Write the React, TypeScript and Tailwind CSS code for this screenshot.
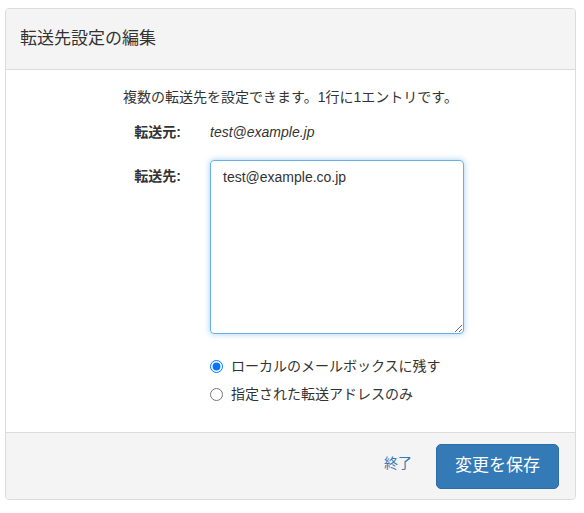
export default function App() {
  return (
    <div className="w-[584px] h-[513px] bg-white pt-[8px] px-[5px] text-[14px] text-[#333]" style={{ fontFamily: '"Liberation Sans", "Noto Sans CJK JP", sans-serif' }}>
      <div className="w-[571px] border border-[#dcdcdc] rounded-[4px] overflow-hidden">
        <div className="h-[61px] bg-[#f4f4f4] border-b border-[#dcdcdc] flex items-center px-[14px] text-[17px]">転送先設定の編集</div>
        <div className="pt-[17px] pb-[28px]">
          <p className="text-center leading-[20px]">複数の転送先を設定できます。1行に1エントリです。</p>
          <div className="flex mt-[15px] leading-[20px]">
            <div className="w-[175px] text-right font-bold">転送元:</div>
            <div className="ml-[29px] italic">test@example.jp</div>
          </div>
          <div className="flex mt-[18px]">
            <div className="w-[175px] text-right font-bold leading-[20px] pt-[6px]">転送先:</div>
            <textarea
              defaultValue="test@example.co.jp"
              className="ml-[29px] w-[254px] h-[174px] border border-[#66afe9] rounded-[4px] px-[12px] py-[6px] leading-[20px] outline-none shadow-[0_0_6px_rgba(102,175,233,0.6)]"
            />
          </div>
          <div className="ml-[204px] mt-[22px] flex flex-col gap-[8px]">
            <label className="flex items-center gap-[8px] leading-[20px]">
              <input type="radio" name="m" defaultChecked className="w-[13px] h-[13px] m-0" />
              ローカルのメールボックスに残す
            </label>
            <label className="flex items-center gap-[8px] leading-[20px]">
              <input type="radio" name="m" className="w-[13px] h-[13px] m-0" />
              指定された転送アドレスのみ
            </label>
          </div>
        </div>
        <div className="h-[67px] bg-[#f4f4f4] border-t border-[#dcdcdc] flex items-center justify-end pr-[16px]">
          <a className="text-[#337ab7] mr-[24px] mb-[6px]">終了</a>
          <button className="w-[123px] h-[45px] bg-[#337ab7] border border-[#2e6da4] rounded-[5px] text-white text-[17px]">変更を保存</button>
        </div>
      </div>
    </div>
  );
}
